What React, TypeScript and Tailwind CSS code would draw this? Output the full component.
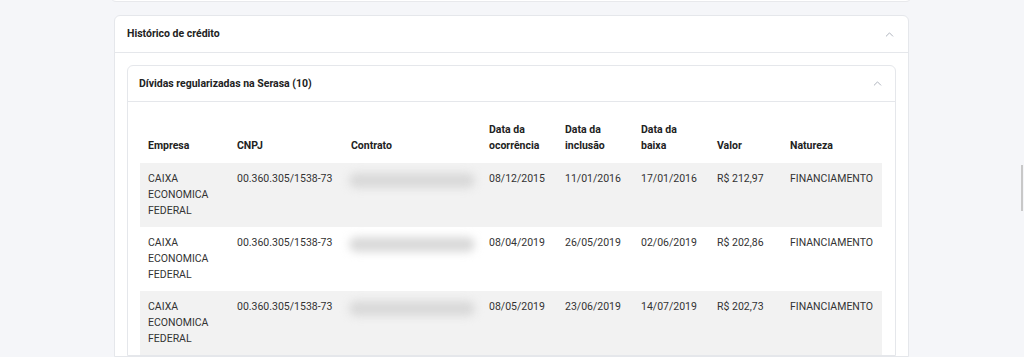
import { ChevronUp } from 'lucide-react';

const rows = [
  { oc: '08/12/2015', inc: '11/01/2016', bx: '17/01/2016', valor: 'R$ 212,97' },
  { oc: '08/04/2019', inc: '26/05/2019', bx: '02/06/2019', valor: 'R$ 202,86' },
  { oc: '08/05/2019', inc: '23/06/2019', bx: '14/07/2019', valor: 'R$ 202,73' },
];

const App = () => {
  return (
    <div
      className="relative h-[357px] w-[1024px] overflow-hidden bg-[#f5f6f9] text-[10.5px] leading-4 text-[#333]"
      style={{ fontFamily: 'Roboto, "Liberation Sans", sans-serif' }}
    >
      <div className="ml-[110px] -mt-[10px] h-[12px] w-[802px] rounded-b-md border border-[#e8e9ec] bg-white" />

      <div className="ml-[114px] mt-[13px] w-[795px] rounded-t-md border border-[#e5e7eb] bg-white">
        <div className="flex h-[37px] items-center justify-between border-b border-[#e5e7eb] pl-[12px] pr-[12px]">
          <span className="font-bold text-[#222]">Histórico de crédito</span>
          <ChevronUp size={13} strokeWidth={1.5} className="text-[#9ca3af]" />
        </div>

        <div className="px-[12px] pt-[12px]">
          <div className="rounded-t-md border border-[#e5e7eb] bg-white">
            <div className="flex h-[36px] items-center justify-between border-b border-[#e5e7eb] pl-[11px] pr-[11px]">
              <span className="font-bold text-[#222]">Dívidas regularizadas na Serasa (10)</span>
              <ChevronUp size={13} strokeWidth={1.5} className="text-[#9ca3af]" />
            </div>

            <div className="px-[12px] pt-[12px]">
              <table className="w-[742px] table-fixed border-collapse text-left">
                <colgroup>
                  <col className="w-[89px]" />
                  <col className="w-[114px]" />
                  <col className="w-[138px]" />
                  <col className="w-[76px]" />
                  <col className="w-[76px]" />
                  <col className="w-[76px]" />
                  <col className="w-[73px]" />
                  <col className="w-[100px]" />
                </colgroup>
                <thead>
                  <tr className="font-bold text-[#222]">
                    <th className="px-2 pb-[9px] pt-2 align-bottom">Empresa</th>
                    <th className="px-2 pb-[9px] pt-2 align-bottom">CNPJ</th>
                    <th className="px-2 pb-[9px] pt-2 align-bottom">Contrato</th>
                    <th className="px-2 pb-[9px] pt-2 align-bottom">Data da ocorrência</th>
                    <th className="px-2 pb-[9px] pt-2 align-bottom">Data da inclusão</th>
                    <th className="px-2 pb-[9px] pt-2 align-bottom">Data da baixa</th>
                    <th className="px-2 pb-[9px] pt-2 align-bottom">Valor</th>
                    <th className="px-2 pb-[9px] pt-2 align-bottom">Natureza</th>
                  </tr>
                </thead>
                <tbody>
                  {rows.map((r, i) => (
                    <tr key={i} className={i % 2 === 0 ? 'h-[64px] bg-[#f2f2f2]' : 'h-[64px] bg-white'}>
                      <td className="px-2 py-2 align-top">
                        CAIXA
                        <br />
                        ECONOMICA
                        <br />
                        FEDERAL
                      </td>
                      <td className="whitespace-nowrap px-2 py-2 align-top">00.360.305/1538-73</td>
                      <td className="px-2 py-2 align-top">
                        <div className="-ml-[2px] mt-[2px] h-[15px] w-[126px] rounded-full bg-[#d9d9d9] blur-[4px]" />
                      </td>
                      <td className="px-2 py-2 align-top">{r.oc}</td>
                      <td className="px-2 py-2 align-top">{r.inc}</td>
                      <td className="px-2 py-2 align-top">{r.bx}</td>
                      <td className="px-2 py-2 align-top">{r.valor}</td>
                      <td className="whitespace-nowrap px-2 py-2 align-top">FINANCIAMENTO</td>
                    </tr>
                  ))}
                </tbody>
              </table>
            </div>
          </div>
        </div>
      </div>

      <div className="absolute right-[1px] top-[165px] h-[46px] w-[2px] bg-[#c8c8c8]" />
    </div>
  );
};

export default App;
